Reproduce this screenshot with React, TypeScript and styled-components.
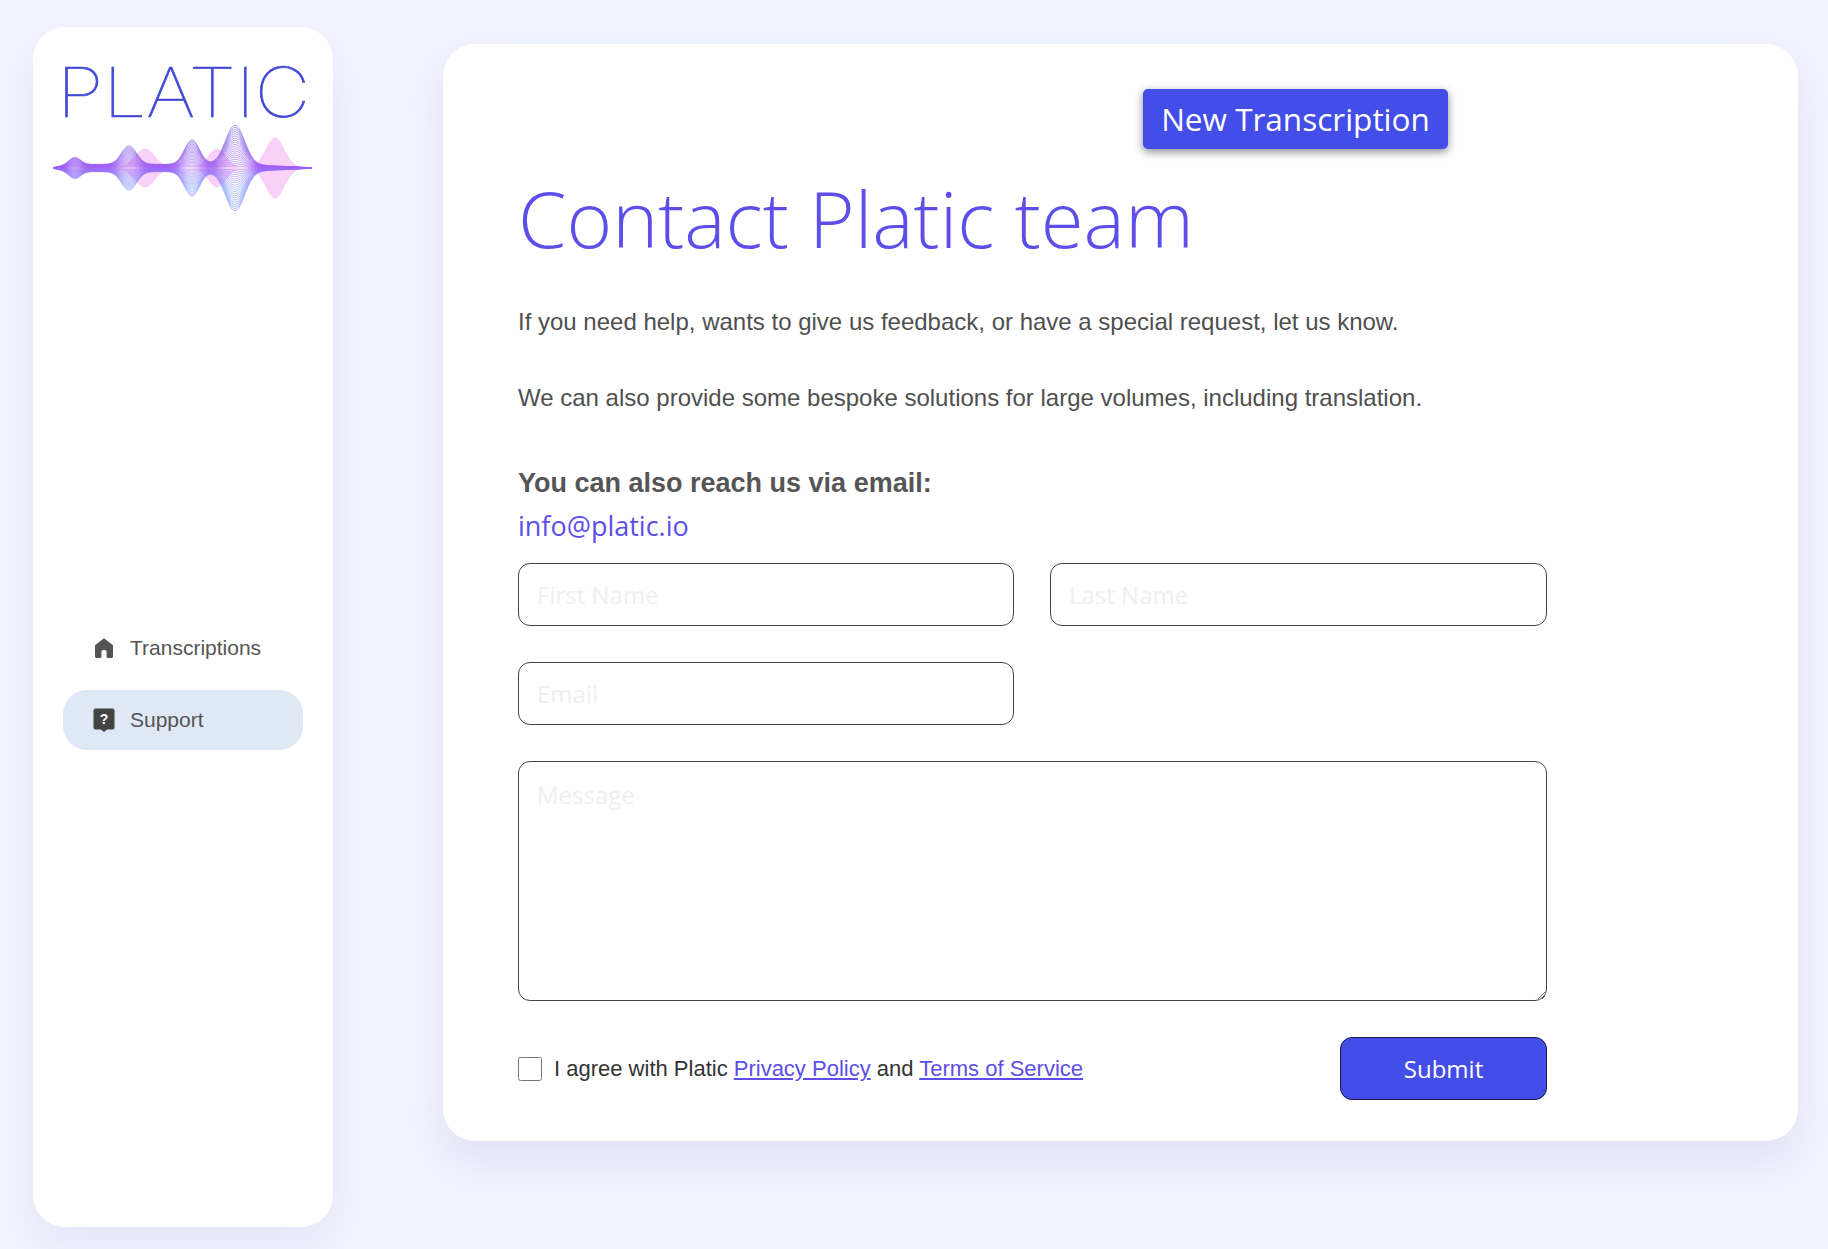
import styled, { createGlobalStyle } from 'styled-components';

const GlobalStyle = createGlobalStyle`
  html, body {
    margin: 0;
    padding: 0;
    background: #f2f3fe;
  }
  * {
    box-sizing: border-box;
  }
`;

// wave logo: nested contour lines around a sum of gaussian bumps
const CENTER_Y = 62;
const gauss = (x: number, mid: number, height: number, sigma: number) =>
  height * Math.exp(-((x - mid) ** 2) / (2 * sigma * sigma));

const envelope = (x: number) => {
  const taper = Math.min(1, (x - 3) / 16) * Math.min(1, (262 - x) / 70);
  const base = 3.4 * Math.max(0, taper) + 0.3;
  return (
    base +
    gauss(x, 25, 7, 5.5) +
    gauss(x, 79, 18.5, 7.5) +
    gauss(x, 142, 24.5, 7.5) +
    gauss(x, 185, 39, 9.5)
  );
};

const blob = (x: number) =>
  gauss(x, 95, 19, 10) + gauss(x, 167, 19, 9) + gauss(x, 225, 30, 9.5) + 0.3;

const tracePath = (fn: (x: number) => number, k: number) => {
  let top = '';
  let bottom = '';
  for (let x = 3; x <= 262; x += 1) {
    const d = fn(x) * k;
    top += `${top ? 'L' : 'M'}${x} ${(CENTER_Y - d).toFixed(2)}`;
    bottom += `${bottom ? 'L' : 'M'}${x} ${(CENTER_Y + d).toFixed(2)}`;
  }
  return { top, bottom };
};

const contours = Array.from({ length: 20 }, (_, i) => tracePath(envelope, (i + 1) / 20));

const blobOutline = () => {
  const upper: string[] = [];
  const lower: string[] = [];
  for (let x = 3; x <= 262; x += 1) {
    upper.push(`${x} ${(CENTER_Y - blob(x)).toFixed(2)}`);
    lower.unshift(`${x} ${(CENTER_Y + blob(x)).toFixed(2)}`);
  }
  return `M${upper.join('L')}L${lower.join('L')}Z`;
};

const WaveLogo = () => (
  <WaveSvg viewBox="0 0 266 124" width="266" height="124">
    <defs>
      <linearGradient id="waveTop" gradientUnits="userSpaceOnUse" x1="0" y1="20" x2="0" y2="62">
        <stop offset="0" stopColor="#5a45d0" />
        <stop offset="1" stopColor="#a05cf5" />
      </linearGradient>
      <linearGradient id="waveBottom" gradientUnits="userSpaceOnUse" x1="0" y1="62" x2="0" y2="106">
        <stop offset="0" stopColor="#9a64f6" />
        <stop offset="0.5" stopColor="#7a9af8" />
        <stop offset="1" stopColor="#4f6fd8" />
      </linearGradient>
    </defs>
    <path d={blobOutline()} fill="#f9d0f8" />
    {contours.map((c, i) => (
      <g key={i} fill="none" strokeWidth="0.5">
        <path d={c.top} stroke="url(#waveTop)" />
        <path d={c.bottom} stroke="url(#waveBottom)" />
      </g>
    ))}
  </WaveSvg>
);

const HomeIcon = () => (
  <svg width="24" height="24" viewBox="0 0 24 24" fill="#555">
    <path d="M12 2.2 3.4 8.9c-.3.2-.4.5-.4.8v11c0 .7.5 1.2 1.2 1.2h4.3c.5 0 .9-.4.9-.9v-5.4c0-1 1.1-1.7 2.6-1.7s2.6.7 2.6 1.7V21c0 .5.4.9.9.9h4.3c.7 0 1.2-.5 1.2-1.2v-11c0-.3-.1-.6-.4-.8L12 2.2Z" />
  </svg>
);

const SupportIcon = () => (
  <svg width="24" height="26" viewBox="0 0 24 26">
    <path
      d="M3.5 1.5h17c1.100 0 2 .9 2 2v17c0 1.100-.9 2-2 2h-5.300L12 25l-3.200-2.500H3.500c-1.100 0-2-.9-2-2v-17c0-1.100.9-2 2-2Z"
      fill="#444"
    />
    <QuestionMark x="12" y="16.500" textAnchor="middle">?</QuestionMark>
  </svg>
);

export default function App() {
  return (
    <Page>
      <GlobalStyle />
      <Sidebar>
        <Logo>
          <LogoWord viewBox="0 0 280 90" width="280" height="90">
            <LogoText x="14" y="66" textLength="253" lengthAdjust="spacingAndGlyphs">PLATIC</LogoText>
          </LogoWord>
          <WaveLogo />
        </Logo>
        <Nav>
          <NavItem>
            <HomeIcon />
            Transcriptions
          </NavItem>
          <NavItem $active>
            <SupportIcon />
            Support
          </NavItem>
        </Nav>
      </Sidebar>
      <Card>
        <Toolbar>
          <NewButton>New Transcription</NewButton>
        </Toolbar>
        <Title>Contact Platic team</Title>
        <Paragraph>If you need help, wants to give us feedback, or have a special request, let us know.</Paragraph>
        <Paragraph>We can also provide some bespoke solutions for large volumes, including translation.</Paragraph>
        <ReachLabel>You can also reach us via email:</ReachLabel>
        <EmailLink href="#">info@platic.io</EmailLink>
        <Form>
          <Input placeholder="First Name" />
          <Input placeholder="Last Name" />
          <Input placeholder="Email" />
          <MessageArea placeholder="Message" />
          <FormFooter>
            <Agreement>
              <Checkbox type="checkbox" />
              <span>
                I agree with Platic <InlineLink href="#">Privacy Policy</InlineLink> and{' '}
                <InlineLink href="#">Terms of Service</InlineLink>
              </span>
            </Agreement>
            <SubmitButton type="button">Submit</SubmitButton>
          </FormFooter>
        </Form>
      </Card>
    </Page>
  );
}

const Page = styled.div`
  display: flex;
  align-items: flex-start;
  gap: 110px;
  width: 1828px;
  height: 1249px;
  padding: 27px 0 0 33px;
  overflow: hidden;
  background: #f2f3fe;
`;

const Sidebar = styled.aside`
  display: flex;
  flex-direction: column;
  flex: none;
  width: 300px;
  height: 1200px;
  padding: 24px 30px 0;
  background: #fff;
  border-radius: 32px;
  box-shadow: 0 20px 40px rgba(120, 125, 200, 0.1);
`;

const Logo = styled.div`
  display: flex;
  flex-direction: column;
  align-items: center;
  margin: 0 -20px;
`;

const LogoWord = styled.svg`
  display: block;
  flex: none;
`;

const LogoText = styled.text`
  font-family: 'Inter', sans-serif;
  font-weight: 100;
  font-size: 69px;
  fill: #4149d6;
  stroke: #4149d6;
  stroke-width: 0.7px;
`;

const WaveSvg = styled.svg`
  display: block;
  flex: none;
  margin-top: -35px;
`;

const Nav = styled.nav`
  display: flex;
  flex-direction: column;
  gap: 12px;
  margin-top: 388px;
`;

const NavItem = styled.a<{ $active?: boolean }>`
  display: flex;
  align-items: center;
  gap: 14px;
  height: 60px;
  padding-left: 29px;
  border-radius: 24px;
  background: ${({ $active }) => ($active ? '#dfe9f5' : 'transparent')};
  color: #555;
  font-family: 'Liberation Sans', Arial, sans-serif;
  font-size: 21px;
`;

const QuestionMark = styled.text`
  font-family: 'Liberation Sans', Arial, sans-serif;
  font-size: 14px;
  font-weight: 700;
  fill: #fff;
`;

const Card = styled.main`
  display: flex;
  flex-direction: column;
  align-items: flex-start;
  flex: none;
  width: 1355px;
  height: 1097px;
  margin-top: 17px;
  padding: 45px 0 0 75px;
  background: #fff;
  border-radius: 32px;
  box-shadow: 0 20px 40px rgba(110, 115, 190, 0.13);
`;

const Toolbar = styled.div`
  display: flex;
  justify-content: flex-end;
  width: 1030px;
  padding-right: 100px;
`;

const NewButton = styled.button`
  width: 305px;
  height: 60px;
  padding: 0 0 2px;
  border: 0;
  border-radius: 5px;
  background: #434de8;
  box-shadow: 0 3px 8px rgba(40, 40, 60, 0.55);
  color: #fff;
  font-family: 'Open Sans', sans-serif;
  font-size: 31.5px;
`;

const Title = styled.h1`
  margin: 15px 0 0;
  color: #5d4eea;
  font-family: 'Open Sans', sans-serif;
  font-weight: 300;
  font-size: 78px;
  line-height: 108px;
`;

const Paragraph = styled.p`
  margin: 36px 0 0;
  color: #4f4f4f;
  font-family: 'Liberation Sans', Arial, sans-serif;
  font-size: 24px;
  line-height: 28px;

  & + & {
    margin-top: 48px;
  }
`;

const ReachLabel = styled.h2`
  margin: 56px 0 0;
  color: #555;
  font-family: 'Liberation Sans', Arial, sans-serif;
  font-weight: 700;
  font-size: 27px;
  line-height: 31px;
`;

const EmailLink = styled.a`
  margin-top: 8px;
  color: #5d4eea;
  font-family: 'Open Sans', sans-serif;
  font-size: 27px;
  line-height: 37px;
  text-decoration: none;
`;

const Form = styled.form`
  display: grid;
  grid-template-columns: 496px 497px;
  column-gap: 36px;
  row-gap: 36px;
  width: 1029px;
  margin-top: 19px;
`;

const Input = styled.input`
  height: 63px;
  padding: 0 18px;
  border: 1px solid #444;
  border-radius: 12px;
  background: #fff;
  font-family: 'Open Sans', sans-serif;
  font-size: 24px;
  outline: none;

  &::placeholder {
    color: #eeeff0;
  }
`;

const MessageArea = styled.textarea`
  grid-column: 1 / -1;
  height: 240px;
  padding: 16px 18px;
  border: 1px solid #444;
  border-radius: 12px;
  background: #fff;
  font-family: 'Open Sans', sans-serif;
  font-size: 24px;
  outline: none;
  resize: vertical;

  &::placeholder {
    color: #eeeff0;
  }
`;

const FormFooter = styled.div`
  grid-column: 1 / -1;
  display: flex;
  align-items: center;
  justify-content: space-between;
`;

const Agreement = styled.label`
  display: flex;
  align-items: center;
  gap: 12px;
  color: #333;
  font-family: 'Liberation Sans', Arial, sans-serif;
  font-size: 22px;
`;

const Checkbox = styled.input`
  width: 24px;
  height: 24px;
  margin: 0;
`;

const InlineLink = styled.a`
  color: #5d4eea;
  text-decoration: underline;
`;

const SubmitButton = styled.button`
  width: 207px;
  height: 63px;
  padding: 0;
  border: 1px solid #1a1a40;
  border-radius: 12px;
  background: #434de8;
  color: #fff;
  font-family: 'Open Sans', sans-serif;
  font-size: 24px;
`;
